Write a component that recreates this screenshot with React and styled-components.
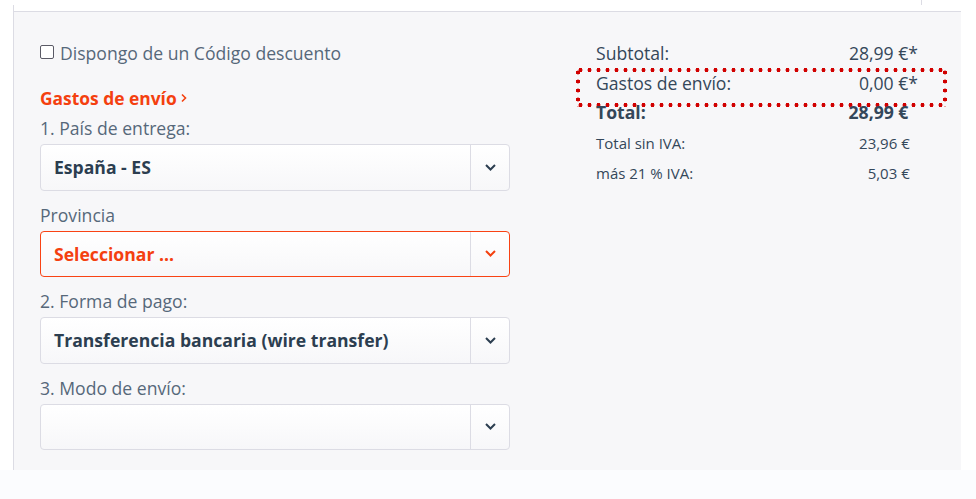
import styled, { createGlobalStyle } from 'styled-components';

const GlobalStyle = createGlobalStyle`
  html, body {
    margin: 0;
    background: #fbfcfe;
    font-family: 'Open Sans', 'Noto Sans', sans-serif;
  }
`;

const Page = styled.div`
  background: #ffffff;
  height: 470px;
  width: 976px;
  display: flex;
  flex-direction: column;
`;

const TopStrip = styled.div`
  height: 5px;
  display: flex;
`;

const Tick = styled.div`
  margin-left: 921px;
  width: 1px;
  height: 5px;
  background: #dcdce4;
`;

const Frame = styled.div`
  flex: 1;
  margin-left: 13px;
  width: 947px;
  border-left: 1px solid #dcdce4;
  display: flex;
  flex-direction: column;
`;

const FrameGap = styled.div`
  height: 6px;
  background: #ffffff;
`;

const Panel = styled.div`
  flex: 1;
  background: #f7f7f9;
  border-top: 1px solid #dcdce4;
  display: grid;
  grid-template-columns: 470px 371px;
  align-items: start;
  column-gap: 66px;
  padding: 29px 0 0 26px;
`;

const LeftCol = styled.div`
  display: flex;
  flex-direction: column;
`;

const CheckRow = styled.label`
  display: flex;
  align-items: center;
  gap: 6px;
  height: 24px;
  font-size: 17.6px;
  color: #56687a;
`;

const Box = styled.span`
  width: 12px;
  height: 12px;
  border: 1px solid #5a5a66;
  border-radius: 2px;
  background: #ffffff;
  margin-top: -3px;
`;

const SectionTitle = styled.div`
  margin-top: 21px;
  font-size: 17.4px;
  font-weight: 700;
  line-height: 24px;
  color: #f4400f;
  display: flex;
  align-items: center;
  gap: 4px;
`;

const Field = styled.div`
  display: flex;
  flex-direction: column;
  margin-top: ${(p) => p.$gap ?? 13}px;
`;

const Label = styled.div`
  font-size: 17.6px;
  line-height: 22px;
  color: #56687a;
  margin-bottom: 5px;
`;

const Select = styled.div`
  height: 46.5px;
  box-sizing: border-box;
  border: 1px solid ${(p) => (p.$error ? '#f94314' : '#dcdce4')};
  border-radius: 4px;
  background: linear-gradient(#ffffff, #f7f7f9);
  display: flex;
  align-items: stretch;
`;

const Value = styled.div`
  flex: 1;
  display: flex;
  align-items: center;
  padding-left: 13px;
  font-size: 17.6px;
  font-weight: 700;
  color: ${(p) => (p.$error ? '#f4400f' : '#2c3e50')};
`;

const Toggle = styled.div`
  width: 38px;
  border-left: 1px solid #dcdce4;
  display: flex;
  align-items: center;
  justify-content: center;
  color: ${(p) => (p.$error ? '#f4400f' : '#2c3e50')};
`;

const RightCol = styled.div`
  display: flex;
  flex-direction: column;
`;

const SumRow = styled.div`
  display: flex;
  justify-content: space-between;
  align-items: center;
  padding: 0 29px 0 20px;
  height: 24px;
  margin-top: ${(p) => p.$mt || 0}px;
  font-size: ${(p) => (p.$small ? 15 : 17.6)}px;
  font-weight: ${(p) => (p.$bold ? 700 : 400)};
  color: #34475a;
`;

const dots = '#d10000 1.8px, transparent 2.2px';

const Highlight = styled.div`
  margin-top: 3px;
  padding: 3px 3px 12px;
  background:
    radial-gradient(circle, ${dots}) left top / 9px 4px repeat-x,
    radial-gradient(circle, ${dots}) left bottom / 9px 4px repeat-x,
    radial-gradient(circle, ${dots}) left top / 4px 9px repeat-y,
    radial-gradient(circle, ${dots}) right top / 4px 9px repeat-y;
  & > div {
    padding: 0 26px 0 17px;
  }
`;

const Star = styled.span`
  visibility: ${(p) => (p.$show ? 'visible' : 'hidden')};
`;

const Chevron = () => (
  <svg width="11" height="7" viewBox="0 0 11 7" fill="none">
    <path d="M1 1l4.5 4.5L10 1" stroke="currentColor" strokeWidth="2" />
  </svg>
);

const SelectBox = ({ value, error }) => (
  <Select $error={error}>
    <Value $error={error}>{value}</Value>
    <Toggle $error={error}>
      <Chevron />
    </Toggle>
  </Select>
);

const App = () => {
  return (
    <>
      <GlobalStyle />
      <Page>
        <TopStrip>
          <Tick />
        </TopStrip>
        <Frame>
          <FrameGap />
          <Panel>
            <LeftCol>
              <CheckRow>
                <Box />
                Dispongo de un Código descuento
              </CheckRow>
              <SectionTitle>
                Gastos de envío
                <svg width="6" height="10" viewBox="0 0 6 10" fill="none">
                  <path d="M1 1.5l3.5 3.5L1 8.5" stroke="currentColor" strokeWidth="1.6" />
                </svg>
              </SectionTitle>
              <Field $gap={7}>
                <Label>1. País de entrega:</Label>
                <SelectBox value="España - ES" />
              </Field>
              <Field>
                <Label>Provincia</Label>
                <SelectBox value="Seleccionar ..." error />
              </Field>
              <Field>
                <Label>2. Forma de pago:</Label>
                <SelectBox value="Transferencia bancaria (wire transfer)" />
              </Field>
              <Field>
                <Label>3. Modo de envío:</Label>
                <SelectBox value="" />
              </Field>
            </LeftCol>
            <RightCol>
              <SumRow>
                <span>Subtotal:</span>
                <span>28,99 €<Star $show>*</Star></span>
              </SumRow>
              <Highlight>
                <SumRow>
                  <span>Gastos de envío:</span>
                  <span>0,00 €<Star $show>*</Star></span>
                </SumRow>
              </Highlight>
              <SumRow $mt={-7} $bold>
                <span>Total:</span>
                <span>28,99 €<Star>*</Star></span>
              </SumRow>
              <SumRow $mt={7} $small>
                <span>Total sin IVA:</span>
                <span>23,96 €<Star>*</Star></span>
              </SumRow>
              <SumRow $mt={6} $small>
                <span>más 21 % IVA:</span>
                <span>5,03 €<Star>*</Star></span>
              </SumRow>
            </RightCol>
          </Panel>
        </Frame>
      </Page>
    </>
  );
};

export default App;
